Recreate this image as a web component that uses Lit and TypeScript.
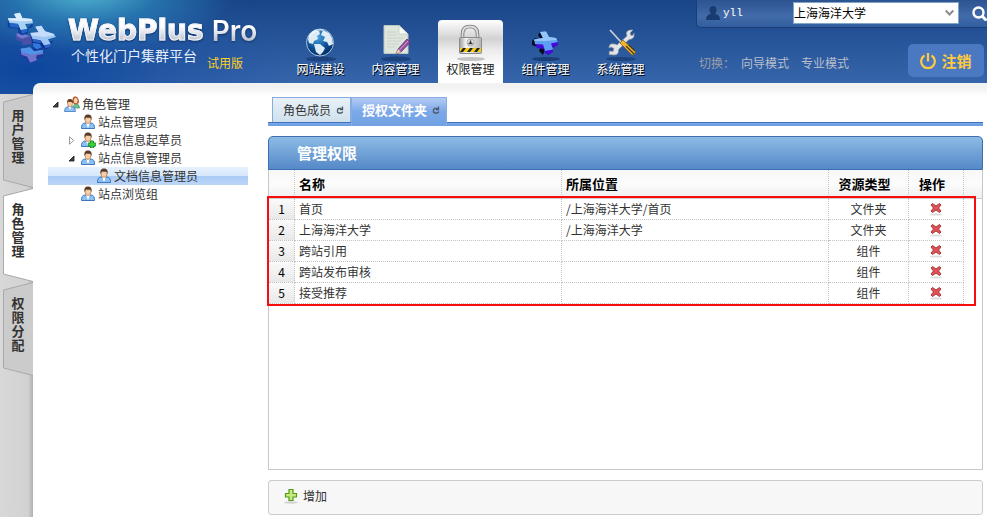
import { LitElement, html, css, svg, nothing } from "lit";
import { customElement, state } from "lit/decorators.js";
import { classMap } from "lit/directives/class-map.js";

type IconName = "site" | "content" | "rights" | "widget" | "system";

const navIcons = {
  site: svg`
    <defs><radialGradient id="globe" cx=".4" cy=".3" r=".8">
      <stop offset="0" stop-color="#4aa9e6"/><stop offset=".55" stop-color="#0c4d94"/><stop offset="1" stop-color="#03254f"/>
    </radialGradient></defs>
    <ellipse cx="20" cy="35" rx="15" ry="2.5" fill="#0b2a5c" opacity=".5"/>
    <circle cx="19" cy="18.500" r="13.5" fill="url(#globe)" stroke="#a9c6df" stroke-width="1"/>
    <path d="M7 15Q8 9 14 6L18 7L19 10L16 12L17 15L13 17L12 20L8 19ZM22 6L28 9L31 14L32 20L28 22L26 18L22 17L24 13L20 11ZM13 20L19 20L24 24L22 28L19 31L15 28Z" fill="#dcebf6"/>
    <path d="M8 13Q12 5 22 6" stroke="#fff" stroke-width="2" fill="none" opacity=".5"/>`,
  content: svg`
    <ellipse cx="20" cy="35" rx="15" ry="2.500" fill="#0b2a5c" opacity=".5"/>
    <path d="M8 1.500H23L32 10V29.500H8Z" fill="#dde5dc" stroke="#bcc8bd"/>
    <path d="M23 1.500V10H32Z" fill="#f8faf6" stroke="#bcc8bd" stroke-width=".7"/>
    <path d="M11 8H20M11 11H21M11 14H27M11 17H25M11 20H23M11 23H19" stroke="#cad4ca" stroke-width="1"/>
    <path d="M20 30L22 25L31 15L34.500 18L25 28Z" fill="#93519c" stroke="#5b2c66" stroke-width=".7"/>
    <path d="M23.500 26L32 17" stroke="#d5a0d8" stroke-width="1"/>
    <path d="M20 30L22 25L25 28Z" fill="#e7cfae"/>`,
  rights: svg`
    <defs><linearGradient id="steel" x2="1"><stop stop-color="#9d9d9d"/><stop offset=".3" stop-color="#f6f6f6"/><stop offset="1" stop-color="#b5b5b5"/></linearGradient></defs>
    <ellipse cx="20" cy="35" rx="14" ry="2" fill="#777" opacity=".4"/>
    <path d="M11.500 15V10Q11.500 2.500 19 2.500Q26.500 2.500 26.500 10V15" fill="none" stroke="#777" stroke-width="3.500"/>
    <path d="M11.500 15V10Q11.500 2.500 19 2.500Q26.500 2.500 26.500 10V15" fill="none" stroke="#dedede" stroke-width="1.800"/>
    <rect x="8.500" y="13.500" width="22" height="16" rx="1" fill="url(#steel)" stroke="#8c8c8c"/>
    <rect x="9" y="24" width="21" height="4" fill="#f6cc1a"/>
    <path d="M9 28L12 24H15L12 28ZM16 28L19 24H22L19 28ZM23 28L26 24H29L26 28Z" fill="#222"/>
    <circle cx="19.500" cy="18.500" r="3.500" fill="#e8e8e8" stroke="#aaa"/>
    <path d="M17.500 19.500H21.500M19.500 16.500V19.500" stroke="#333" stroke-width="1.500"/>`,
  widget: svg`
    <ellipse cx="20" cy="35" rx="14" ry="2" fill="#0b2a5c" opacity=".6"/>
    <path d="M6 17L9 14L15 16L12 11L14 8L19 14L19 25L17 31L13 27L14 24L6 21Z" fill="#060b22"/>
    <path d="M9 20L18 20V25L11 24ZM19 26L27 25L27 28L22 31L18 28ZM24 19L32 17V21L27 24Z" fill="#4409d8"/>
    <path d="M14 8L20 7.500L23 13L30 14L32 18L25 19.500L27 25.500L19 27L17 20.500L9 20L8 15.500L17 14Z" fill="#5d9df2"/>
    <path d="M14 8L20 7.500L23 13L30 14L31 16L20 17L8.500 17L8 15.500L17 14Z" fill="#93c5fa"/>`,
  system: svg`
    <ellipse cx="20" cy="35" rx="15" ry="2" fill="#0b2a5c" opacity=".5"/>
    <path d="M8 30.500L8.500 27L12 27.500L13 24.500L10 23L8 24Q8 19 13 20Q15 20 16 21L26 12Q24 7 29 6L32 6L29 9L30 11.500L32.500 11L33 9Q34 15 28 15.500L17.500 25.500Q18 31 13 31Z" fill="#e2e4e6" stroke="#93999f" stroke-width=".7"/>
    <path d="M9 6L20 18" stroke="#c9ccd0" stroke-width="1.800"/>
    <path d="M19 19L22 16L34.500 27.500Q34 31 31 31Z" fill="#f0b52a" stroke="#7b5a10" stroke-width=".7"/>
    <path d="M25 22L33 30M28 21L34 27" stroke="#443a20" stroke-width="1.300"/>`,
};

const person = svg`
  <path d="M1.500 14.500Q1 9.500 5 9L8 11L11 9Q15 9.500 14.500 14.500Z" fill="#8cc0f2" stroke="#3f79bb"/>
  <path d="M6 9L8 14L10 9Z" fill="#fff"/>
  <ellipse cx="8" cy="5.500" rx="3" ry="4" fill="#f6cda4" stroke="#a8713f" stroke-width=".7"/>
  <path d="M4.500 6Q3.500 .5 8 .5Q12.500 .5 11.500 6L10.500 3.800Q8 4 6 3.500Z" fill="#5a3a25"/>`;

const treeIcons = {
  group: svg`
    <path d="M9 11Q10 7.500 12 8Q15.500 8 15.500 12H9Z" fill="#74c08f" stroke="#3e8b5c" stroke-width=".7"/>
    <path d="M8.500 6Q8 0 11.500 .5Q15 .5 15 7L13 8H10Z" fill="#b4532c"/>
    <ellipse cx="11.700" cy="4.500" rx="1.900" ry="2.700" fill="#f8d3ad"/>
    <path d="M.5 15.500Q.5 11 4 10.500L6 12L8 10.500Q11.500 11 11.500 15.500Z" fill="#8cc0f2" stroke="#3f79bb" stroke-width=".8"/>
    <path d="M4.700 11L6 14L7.300 11Z" fill="#fff"/>
    <ellipse cx="6" cy="7.500" rx="2.500" ry="3.300" fill="#f6cda4" stroke="#a8713f" stroke-width=".6"/>
    <path d="M3 7.500Q2.500 3 6 3Q9.500 3 9 7.500L8 6Q6 6 4 5.500Z" fill="#6a3c1e"/>`,
  person,
  add: svg`${person}
    <path d="M10.500 9H13.500V11H15.700V14H13.500V16H10.500V14H8.300V11H10.500Z" fill="#3fd03f" stroke="#148a1c" stroke-width=".8"/>`,
};

interface TreeNode {
  label: string;
  depth: number;
  icon: keyof typeof treeIcons;
  fold?: "open" | "closed";
}

const tree: TreeNode[] = [
  { label: "角色管理", depth: 0, icon: "group", fold: "open" },
  { label: "站点管理员", depth: 1, icon: "person" },
  { label: "站点信息起草员", depth: 1, icon: "add", fold: "closed" },
  { label: "站点信息管理员", depth: 1, icon: "person", fold: "open" },
  { label: "文档信息管理员", depth: 2, icon: "person" },
  { label: "站点浏览组", depth: 1, icon: "person" },
];

const nav: { label: string; icon: IconName }[] = [
  { label: "网站建设", icon: "site" },
  { label: "内容管理", icon: "content" },
  { label: "权限管理", icon: "rights" },
  { label: "组件管理", icon: "widget" },
  { label: "系统管理", icon: "system" },
];

const rows = [
  { name: "首页", path: "/上海海洋大学/首页", type: "文件夹" },
  { name: "上海海洋大学", path: "/上海海洋大学", type: "文件夹" },
  { name: "跨站引用", path: "", type: "组件" },
  { name: "跨站发布审核", path: "", type: "组件" },
  { name: "接受推荐", path: "", type: "组件" },
];

const base = css`
  * { box-sizing: border-box; }
  button, select {
    font: inherit; color: inherit; border: 0; padding: 0; margin: 0; background: none; cursor: pointer;
  }
  a { color: inherit; text-decoration: none; }
  svg { display: block; flex: none; }
`;

@customElement("app-header")
export class AppHeader extends LitElement {
  @state() private active: IconName = "rights";

  static styles = [base, css`
    :host { display: flex; height: 83px; color: #fff; }
    .brand { flex: 0 0 288px; display: flex; padding-left: 5px; gap: 11px; }
    .logo { margin-top: 12px; }
    .words { padding-top: 15px; white-space: nowrap; }
    .title { display: flex; gap: 8px; margin: 0; line-height: 32px; font-size: 28px; font-family: "DejaVu Sans", sans-serif; }
    .title span {
      background: linear-gradient(#fff 35%, #b4bccb 85%);
      -webkit-background-clip: text; background-clip: text; color: transparent;
      filter: drop-shadow(0 1px 1px #12356c);
    }
    .title .main { -webkit-text-stroke: 1px #eef1f6; }
    .title .pro { font-family: Inter, "Liberation Sans", sans-serif; font-weight: 600; }
    .tagline { display: flex; gap: 10px; padding-left: 3px; font-size: 14px; line-height: 16px; color: #e6eefa; }
    .trial { margin-top: 8px; font-size: 12px; color: #ffd21e; }
    nav { display: flex; gap: 10px; align-items: flex-end; }
    .item {
      width: 65px; height: 63px; display: flex; flex-direction: column; align-items: center;
      padding-top: 4px; border-radius: 4px 4px 0 0; line-height: 16px; text-shadow: 1px 1px 0 #000;
    }
    .item svg { margin-bottom: -1px; }
    .item.active {
      color: #222; text-shadow: none;
      background: linear-gradient(#fff, #d2d2d2 30%, #ececec 48%, #fff 75%);
    }
    .right { flex: 0 0 291px; margin-left: auto; display: flex; flex-direction: column; }
    .user {
      height: 28px; display: flex; align-items: center; padding: 0 0 1px 9px; overflow: hidden;
      background: linear-gradient(#2d5391, #426ba9 60%, #315e9f); border: solid #1a3d78; border-width: 0 0 1px 1px;
      border-radius: 0 0 0 5px;
    }
    .who { flex: 0 0 73px; padding-left: 3px; font: 11px/16px "Liberation Mono", monospace; }
    .pick { position: relative; width: 166px; height: 22px; }
    select {
      width: 100%; height: 22px; appearance: none; background: #fff; color: #000;
      border: 1px solid #7fa6c6; padding-left: 0;
    }
    .pick svg { position: absolute; right: 5px; top: 7px; pointer-events: none; }
    .search { margin-left: 13px; }
    .modes {
      flex: 1; display: flex; align-items: flex-end; gap: 12px; padding: 0 3px 6px; line-height: 28px; color: #b8bfca;
    }
    .hint { color: #9b9fa8; width: 30px; white-space: nowrap; }
    .logout {
      margin-left: auto; width: 76px; height: 33px; border-radius: 5px; background: #4a79c2;
      color: #ffca3e; font-weight: bold; font-size: 15px; display: flex; align-items: center; justify-content: center; gap: 5px;
    }
  `];

  render() {
    return html`
      <div class="brand">
        <svg class="logo" width="52" height="52" viewBox="9 12 156 156" aria-hidden="true">
          <path d="M44 76L66 78L84 84L90 96L88 108L62 112L58 100L42 96Z" fill="#4a50a8"/>
          <path d="M44 76L66 78L84 84L60 92L44 84Z" fill="#7379cf"/>
          <path d="M92 96L110 102L122 118L124 134L104 140L92 128Z" fill="#123c9c"/>
          <path d="M92 96L112 104L120 118L104 124L94 116Z" fill="#2f79dc"/>
          <path d="M54 128L78 140L104 142L124 138V146L106 152L108 156L84 166L76 162L74 152L54 144Z" fill="#1f3a9e"/>
          <path d="M56 122L84 118L96 130L122 126L124 138L104 142L102 150L106 156L84 164L76 146L58 140Z" fill="#6f74cc"/>
          <path d="M56 122L84 118L96 130L122 126L123 132L88 140L58 132Z" fill="#4f96ea"/>
          <path d="M18 32L22 44L48 48L56 66L76 62L92 46V56L78 62V76L60 82L50 76L48 62L22 60L17 54Z" fill="#0d3d9b"/>
          <path d="M22 44L48 47L50 60L24 57ZM56 66L76 62V72L60 77Z" fill="#2366c8"/>
          <path d="M36 18L54 14L61 30L90 33L93 46L69 48L76 62L56 66L48 47L22 44L18 31L43 31Z" fill="#a9d1f4"/>
          <path d="M36 18L54 14L61 30L90 33L91 38L56 40L20 37L18 31L43 31Z" fill="#dcebfb"/>
          <path d="M86 78L92 92L116 98L126 112L146 108L163 86L154 98L144 102L148 118L130 124L118 116L114 108L90 104Z" fill="#103090"/>
          <path d="M91 92L116 98V106L93 101ZM126 112L146 108V117L130 121Z" fill="#2a62c6"/>
          <path d="M100 56L118 53L129 70L154 77L162 87L138 94L146 108L126 112L116 97L91 92L85 75L110 73Z" fill="#9cc5f5"/>
          <path d="M100 56L118 53L129 70L154 77L158 82L124 87L88 82L85 75L110 73Z" fill="#c5dcfa"/>
        </svg>
        <div class="words">
          <h1 class="title"><span class="main">WebPlus</span><span class="pro">Pro</span></h1>
          <div class="tagline"><span>个性化门户集群平台</span><span class="trial">试用版</span></div>
        </div>
      </div>
      <nav>
        ${nav.map((n) => html`
          <button class=${classMap({ item: true, active: n.icon === this.active })} @click=${() => (this.active = n.icon)}>
            <svg width="40" height="38" viewBox="0 0 40 38" aria-hidden="true">${navIcons[n.icon]}</svg>
            ${n.label}
          </button>`)}
      </nav>
      <div class="right">
        <div class="user">
          <svg width="14" height="14" viewBox="0 0 14 14" aria-hidden="true">
            <path d="M3.500 4Q3.500 0 7 0Q10.500 0 10.500 4Q10.500 6.500 9 8Q14 8.500 14 14H0Q0 8.500 5 8Q3.500 6.500 3.500 4Z" fill="#183b70"/>
          </svg>
          <span class="who">yll</span>
          <div class="pick">
            <select aria-label="站点"><option>上海海洋大学</option></select>
            <svg width="9" height="8" viewBox="0 0 9 8" aria-hidden="true"><path d="M.7 1.500L4.500 5.500L8.300 1.500" fill="none" stroke="#8c8c8c" stroke-width="2"/></svg>
          </div>
          <button class="search" aria-label="搜索">
            <svg width="15" height="15" viewBox="0 0 15 15"><circle cx="6.500" cy="6.500" r="5" fill="none" stroke="#fff" stroke-width="2.400"/><path d="M10 10L14.500 14.500" stroke="#fff" stroke-width="3"/></svg>
          </button>
        </div>
        <div class="modes">
          <span class="hint">切换：</span>
          <a href="#guide">向导模式</a>
          <a href="#pro">专业模式</a>
          <button class="logout">
            <svg width="16" height="16" viewBox="0 0 16 16" aria-hidden="true"><path d="M4.500 2.500A6.800 6.800 0 1 0 11.500 2.500M8 0V8.500" fill="none" stroke="#ffca3e" stroke-width="2.200"/></svg>
            注销
          </button>
        </div>
      </div>`;
  }
}

@customElement("side-tabs")
export class SideTabs extends LitElement {
  @state() private current = "角色管理";

  static styles = [base, css`
    :host {
      display: block; flex: 0 0 33px; padding-left: 3px; margin-top: 11px;
      background: linear-gradient(90deg, #d8d8d8, #d2d2d2 85%, #b0b0b0);
    }
    .tab {
      position: relative; display: flex; align-items: flex-start; width: 30px; height: 94px; padding: 14px 8px 0;
      font-weight: bold; font-size: 13px; line-height: 14px; text-align: center; color: #333;
    }
    .shape { position: absolute; left: 0; top: 0; }
    .word { position: relative; display: block; width: 14px; word-break: break-all; }
    .fill { fill: #cbcbcb; }
    .active .fill { fill: #fff; }
    .edge { fill: none; stroke: #a9a9a9; }
  `];

  render() {
    return ["用户管理", "角色管理", "权限分配"].map((t) => html`
      <button class=${classMap({ tab: true, active: t === this.current })} @click=${() => (this.current = t)}>
        <svg class="shape" width="30" height="94" viewBox="0 0 30 94" aria-hidden="true">
          <path class="fill" d="M30 .5L.5 8V86L30 93.500Z"/>
          <path class="edge" d="M30 .5L.5 8V86L30 93.500"/>
        </svg>
        <span class="word">${t}</span>
      </button>`);
  }
}

@customElement("role-tree")
export class RoleTree extends LitElement {
  @state() private selected = "文档信息管理员";

  static styles = [base, css`
    :host { display: block; flex: 0 0 235px; padding: 12px 20px 0 15px; }
    ul { list-style: none; margin: 0; padding: 0; }
    .row {
      width: 100%; height: 18px; display: flex; align-items: center; line-height: 18px; color: #333; white-space: nowrap;
    }
    .row.selected { background: linear-gradient(#e6f1fd, #d6e7fb 49%, #a9cbf6 50%, #bcd6f8); }
    .depth1 { padding-left: 16px; }
    .depth2 { padding-left: 32px; }
    .fold { width: 16px; padding-left: 4px; }
    .face { margin-right: 2px; }
  `];

  render() {
    return html`<ul>${tree.map((n) => html`
      <li><button class=${classMap({ row: true, selected: n.label === this.selected, ["depth" + n.depth]: true })}
        @click=${() => (this.selected = n.label)}>
        <span class="fold">${n.fold
          ? html`<svg width="8" height="9" viewBox="0 0 8 9" aria-hidden="true">${n.fold === "open"
              ? svg`<path d="M6 2V7H1Z" fill="#444" stroke="#111" stroke-width=".8"/>`
              : svg`<path d="M1.500 .8L5.800 4.500L1.500 8.200Z" fill="#fff" stroke="#999"/>`}</svg>`
          : nothing}</span>
        <svg class="face" width="16" height="16" viewBox="0 0 16 16" aria-hidden="true">${treeIcons[n.icon]}</svg>
        ${n.label}
      </button></li>`)}</ul>`;
  }
}

@customElement("rights-panel")
export class RightsPanel extends LitElement {
  @state() private tab = "授权文件夹";

  static styles = [base, css`
    :host { display: flex; flex-direction: column; flex: 1; min-width: 0; padding: 14px 4px 2px 0; }
    .tabs {
      display: flex; align-items: flex-start; height: 29px; padding-left: 4px; margin-bottom: 10px;
      background: linear-gradient(#4070bd 1px, #8ab3ec 1px, #6c9fe4 2px) bottom / 100% 4px no-repeat;
    }
    .tab {
      height: 25px; display: flex; align-items: center; gap: 5px; padding: 0 6px 0 10px; color: #333;
      border: 1px solid #86ace0; border-bottom: 0; background: linear-gradient(#e8f1f8, #d0e1ec);
    }
    .tab.active {
      height: 29px; padding-bottom: 5px; color: #fff; font-weight: bold; font-size: 13px;
      background: linear-gradient(#b4cbf3, #7aa8e8 50%, #72a2e3);
    }
    .panel {
      flex: 1; border: 1px solid #c8c8c8; border-top: 0; border-radius: 5px 5px 0 0; background: #fff;
    }
    h2 {
      margin: 0 -1px; height: 34px; padding-left: 28px; font-size: 15px; line-height: 32px; color: #fff;
      border: 1px solid #3c6fb2; border-radius: 5px 5px 0 0; background: linear-gradient(#8dbbe5, #5589c8);
    }
    .grid { position: relative; }
    .mark { position: absolute; inset: 26px 6px -2px -2px; border: 2px solid #f80d0d; pointer-events: none; }
    table { width: 100%; table-layout: fixed; border-collapse: separate; border-spacing: 0; line-height: 18px; color: #333; }
    th, td { padding: 0 4px; text-align: left; border: 0 dotted #c4c4c4; border-width: 0 1px 1px 0; white-space: nowrap; }
    td { height: 21px; }
    .num { width: 26px; text-align: center; }
    td.num { background: linear-gradient(#fafafa, #e8e8e8); color: #000; }
    .type { width: 80px; text-align: center; }
    .act { width: 55px; text-align: center; }
    th { height: 29px; font-size: 13px; color: #000; background: linear-gradient(#f7f7f7, #fcfcfc 50%, #efefef); border-bottom: 1px solid #ccc; }
    th.type, th.act { padding-right: 12px; }
    .rest { width: 18px; border-right: 0; }
    td.rest { border: 0; }
    .del { display: block; margin: 0 auto; }
    .bar {
      height: 35px; margin-top: 10px; display: flex; align-items: center; padding: 0 0 3px 15px;
      border: 1px solid #ccc; border-radius: 3px; background: #f7f7f7; color: #333;
    }
    .add { display: flex; align-items: center; gap: 5px; }
  `];

  render() {
    return html`
      <div class="tabs">
        ${["角色成员", "授权文件夹"].map((t) => html`
          <button class=${classMap({ tab: true, active: t === this.tab })} @click=${() => (this.tab = t)}>
            ${t}
            <svg width="8" height="8" viewBox="0 0 8 8" aria-hidden="true"><path d="M5.500 2.500H3Q1.500 2.500 1.500 4V5.500Q1.500 7 3 7H5Q6.500 7 6.500 5.500M6.500 .5V3.500H4" fill="none" stroke="#4c5868" stroke-width="1.300"/></svg>
          </button>`)}
      </div>
      <section class="panel">
        <h2>管理权限</h2>
        <div class="grid">
          <table>
            <thead><tr>
              <th class="num"></th><th>名称</th><th>所属位置</th><th class="type">资源类型</th><th class="act">操作</th><th class="rest"></th>
            </tr></thead>
            <tbody>${rows.map((r, i) => html`
              <tr>
                <td class="num">${i + 1}</td><td>${r.name}</td><td>${r.path}</td><td class="type">${r.type}</td>
                <td class="act"><button class="del" aria-label="删除">
                  <svg width="14" height="14" viewBox="0 0 14 14" aria-hidden="true">
                    <ellipse cx="7" cy="12.500" rx="6" ry="1" fill="#ddd"/>
                    <path d="M3.500 1.500L7 4L10.500 1.500L12 3L9.500 6L12 9L10.500 10.500L7 8L3.500 10.500L2 9L4.500 6L2 3Z" fill="#e2505a" stroke="#a33a34" stroke-width="1"/>
                  </svg></button></td>
                <td class="rest"></td>
              </tr>`)}</tbody>
          </table>
          <div class="mark"></div>
        </div>
      </section>
      <div class="bar">
        <button class="add">
          <svg width="14" height="16" viewBox="0 0 14 16" aria-hidden="true">
            <ellipse cx="7" cy="14.500" rx="7" ry="1.200" fill="#d0d0d0"/>
            <path d="M5 1.500H9V5.500H12.500V9H9V12.500H5V9H1.500V5.500H5Z" fill="#c3ec7c" stroke="#559a1b" stroke-width="1.200"/>
          </svg>
          增加
        </button>
      </div>`;
  }
}

@customElement("app-root")
export class AppRoot extends LitElement {
  static styles = [base, css`
    :host {
      display: flex; flex-direction: column; min-height: 100vh; box-sizing: border-box;
      font: 12px/16px "Noto Sans CJK SC", "Liberation Sans", sans-serif;
      background:
        radial-gradient(ellipse 150px 62px at 85px -8px, #50b4d0, #2d8bbd99 50%, transparent) top / 100% 94px no-repeat,
        radial-gradient(ellipse 260px 110px at 30px 70px, #0c469d, #1a50a299 50%, transparent) top / 100% 94px no-repeat,
        linear-gradient(#184587, #3665ab 83px) top / 100% 94px no-repeat,
        #fff;
    }
    .body { flex: 1; display: flex; }
    main {
      flex: 1; display: flex; min-width: 0; border-radius: 7px 0 0 0;
      background: linear-gradient(#f2f2f2 5px, #fff 13px);
    }
  `];

  render() {
    return html`
      <app-header></app-header>
      <div class="body">
        <side-tabs></side-tabs>
        <main><role-tree></role-tree><rights-panel></rights-panel></main>
      </div>`;
  }
}
